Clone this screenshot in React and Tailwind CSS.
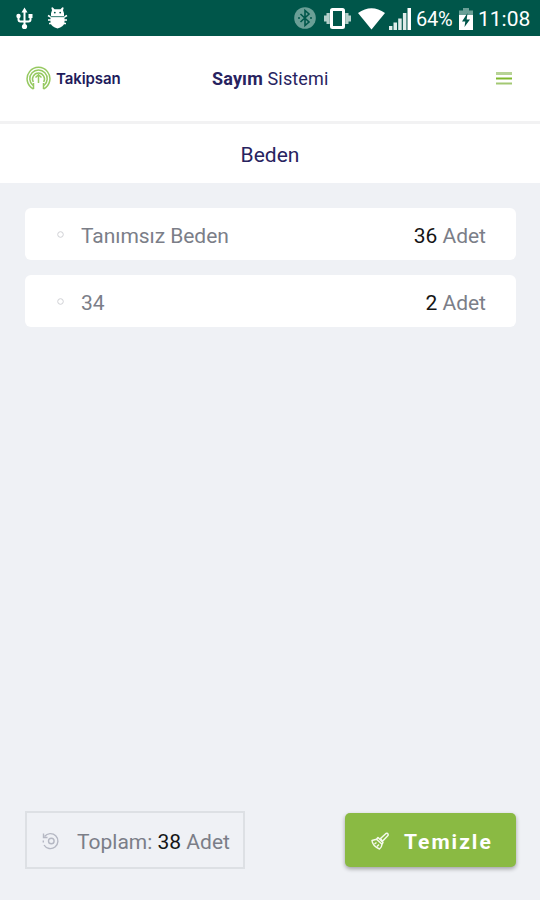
import React from "react";

function UsbIcon() {
  return (
    <svg className="ml-4 h-[23px] w-[17px] shrink-0" viewBox="0 0 17 23" fill="none" stroke="#fff" strokeWidth="2">
      <path d="M8.500 4v15M2.500 9v3.500q0 2 2 2h8q2 0 2-2V9" />
      <path d="M8.500 0.500 11.500 5.500h-6z" fill="#fff" stroke="none" />
      <circle cx="8.500" cy="19.500" r="2.600" fill="#fff" stroke="none" />
      <circle cx="2.500" cy="9" r="2.200" fill="#fff" stroke="none" />
      <path d="M12.500 7h4v4h-4z" fill="#fff" stroke="none" />
    </svg>
  );
}

function BugIcon() {
  return (
    <svg className="ml-[14px] h-[22px] w-[21px] shrink-0" viewBox="0 0 21 22">
      <path d="M4 9V6.300L5 3.200 4.300.7 5.600.2 7.500 2.300h6L15.400.2l1.300.5L16 3.200l1 3.100V9z" fill="#fff" />
      <path d="M3.500 10.500h14v5q-1 4.500-7 6-6-1.500-7-6z" fill="#fff" />
      <path d="M1 8.500l3 1.700h13l3-1.700M1 13h19M2 16.500h17" stroke="#fff" strokeWidth="1.600" fill="none" />
      <path d="M3.500 9.700h14" stroke="#3c8479" strokeWidth=".9" />
      <circle cx="7.800" cy="5.600" r=".9" fill="#00564a" />
      <circle cx="13.200" cy="5.600" r=".9" fill="#00564a" />
    </svg>
  );
}

function StatusBar() {
  return (
    <div className="flex h-9 shrink-0 items-center bg-[#00564a] text-white">
      <UsbIcon />
      <BugIcon />
      <svg className="ml-auto h-[22px] w-[22px] shrink-0" viewBox="0 0 22 22">
        <circle cx="11" cy="11" r="10.800" fill="#6a9f96" />
        <path d="m6.500 7 8.500 8-4 3.500v-15L15 7l-8.500 8" fill="none" stroke="#00564a" strokeWidth="1.600" />
        <circle cx="5" cy="11" r="1" fill="#00564a" />
        <circle cx="17" cy="11" r="1" fill="#00564a" />
      </svg>
      <svg className="ml-2 h-[21px] w-[27px] shrink-0" viewBox="0 0 27 21">
        <rect x="7.500" y="1.500" width="12" height="18" rx="1" fill="none" stroke="#fff" strokeWidth="3" />
        <path d="M2.500 5h3.300v11H2.500zM0 7.500h2.500v6H0zM21.200 5h3.300v11h-3.300zM24.500 7.500H27v6h-2.500z" fill="#b4cfca" />
      </svg>
      <svg className="mt-px ml-[7px] h-[22px] w-[27px] shrink-0" viewBox="0 0 27 22">
        <path d="M0 5Q13.500-4.500 27 5L13.500 21.500z" fill="#fff" />
      </svg>
      <svg className="mt-px ml-1 h-[22px] w-[22px] shrink-0" viewBox="0 0 22 22" fill="#e0ecea">
        <path d="M0 18h3.400v4H0zM4.500 14.500h3.500V22H4.500zM9.200 10.500h3.500V22H9.200zM13.900 5h3.500v17h-3.500z" />
        <path d="M18.500 0H22v22h-3.500z" fill="#fff" />
      </svg>
      <span className="ml-[5px] w-[37px] pt-[3px] text-[20px] leading-[33px] tracking-[-0.300px] whitespace-nowrap">64%</span>
      <svg className="mt-px ml-[6px] h-[22px] w-[14px] shrink-0" viewBox="0 0 14 22">
        <path d="M4 0h6v2.500h4V7H0V2.500h4z" fill="#6a9f96" />
        <path d="M0 7h14v15H0z" fill="#fff" />
        <path d="M8.500 5 3 13.500h3.300L5.500 19 11 11.500H7.700z" fill="#00564a" />
      </svg>
      <span className="mr-[10px] ml-[5px] w-[52px] pt-[3px] text-[21px] leading-[33px] whitespace-nowrap">11:08</span>
    </div>
  );
}

function Logo() {
  return (
    <div className="ml-[26px] flex w-[154px] items-center">
      <svg className="h-[25px] w-[25px]" viewBox="0 0 25 25" fill="none" stroke="#96c961" strokeWidth="1.500">
        <path d="M7.500 23A11.400 11.400 0 1 1 17.500 23" />
        <path d="M7 19.500A8.700 8.700 0 1 1 18 19.500" />
        <path d="M7.300 16A6 6 0 1 1 17.700 16" />
        <path d="M12.500 9v8M9.500 11.500l3-2.700 3 2.700" />
        <path d="M7.500 17v6M17.500 17v6" />
      </svg>
      <span className="ml-[5px] pt-px font-[Inter,sans-serif] text-[15px] leading-5 font-semibold tracking-[-0.100px] text-[#211b5b]">Takipsan</span>
    </div>
  );
}

function ItemRow({ name, count }) {
  return (
    <div className="flex h-[52px] items-center rounded-[6px] bg-white pr-[30px] pl-8 text-[21px] text-[#7b7e88]">
      <svg className="h-[7px] w-[7px]" viewBox="0 0 7 7" fill="none" stroke="#cfd0d4">
        <circle cx="3.500" cy="3.500" r="2.800" />
      </svg>
      <span className="ml-[17px] pt-[5px] tracking-[-0.050px]">{name}</span>
      <span className="ml-auto pt-[5px]"><span className="text-[#151515]">{count}</span> Adet</span>
    </div>
  );
}

export default function App() {
  return (
    <div className="flex h-[900px] w-[540px] flex-col overflow-hidden bg-[#eff1f5] font-[Roboto,sans-serif]">
      <StatusBar />
      <header className="flex h-[88px] shrink-0 items-center border-b-[3px] border-[#f2f2f3] bg-white">
        <Logo />
        <h1 className="ml-8 text-[18px] tracking-[0.150px] whitespace-nowrap text-[#28235f]"><span className="font-bold">Sayım</span> Sistemi</h1>
        <svg className="mr-7 ml-auto h-[13px] w-4" viewBox="0 0 16 13">
          <path d="M0 0h16v3H0z" fill="#b7d395" />
          <path d="M0 5.500h16v2H0z" fill="#7fb82c" />
          <path d="M0 10.500h16v2H0z" fill="#a3c873" />
        </svg>
      </header>
      <h2 className="h-[59px] shrink-0 bg-white text-center text-[21px] leading-[62px] text-[#28235f]">Beden</h2>
      <main className="flex flex-1 flex-col gap-[15px] pt-[25px] pr-6 pl-[25px]">
        <ItemRow name="Tanımsız Beden" count="36" />
        <ItemRow name="34" count="2" />
      </main>
      <footer className="flex h-[89px] shrink-0 items-start justify-between pr-6 pl-[25px]">
        <div className="flex h-[58px] w-[220px] items-center border-2 border-[#dde0e4] pl-[15px] text-[21px] text-[#7b7e88]">
          <svg className="mt-px h-[18px] w-[18px] shrink-0" viewBox="0 0 18 18" fill="none" stroke="#b5b8c3" strokeWidth="1.400">
            <path d="M2.500 4.500A7.500 7.500 0 1 1 2 13" />
            <path d="M1.500 1.500v4h4" />
            <path d="M1.300 8.500v2" />
            <circle cx="9.300" cy="9" r="2.800" />
          </svg>
          <span className="ml-[17px] pt-[5px] whitespace-nowrap">Toplam: <span className="text-[#151515]">38</span> Adet</span>
        </div>
        <button className="mt-[2px] flex h-[54px] w-[171px] items-center rounded-[5px] bg-[#8aba43] pl-[26px] text-[21px] font-bold tracking-[2px] text-white shadow-[0_2px_4px_#00000055]">
          <svg className="mt-px h-[18px] w-[18px] shrink-0" viewBox="0 0 18 18" fill="none" stroke="#f5faec" strokeWidth="1.500" strokeLinejoin="round">
            <path d="m9.500 6.500 5.500-5q1.500-.5 2 .5t-.5 2l-5 5.200z" />
            <path d="m7 5.500 5 5-1 1.800-5.500-5zM5.500 7.300 1 8.500Q1.500 14 8.500 17q2.200-1.500 2.500-4.700M3.500 12l2-1.500M6 14.500l2-2" />
          </svg>
          <span className="ml-[15px] pt-[5px]">Temizle</span>
        </button>
      </footer>
    </div>
  );
}
